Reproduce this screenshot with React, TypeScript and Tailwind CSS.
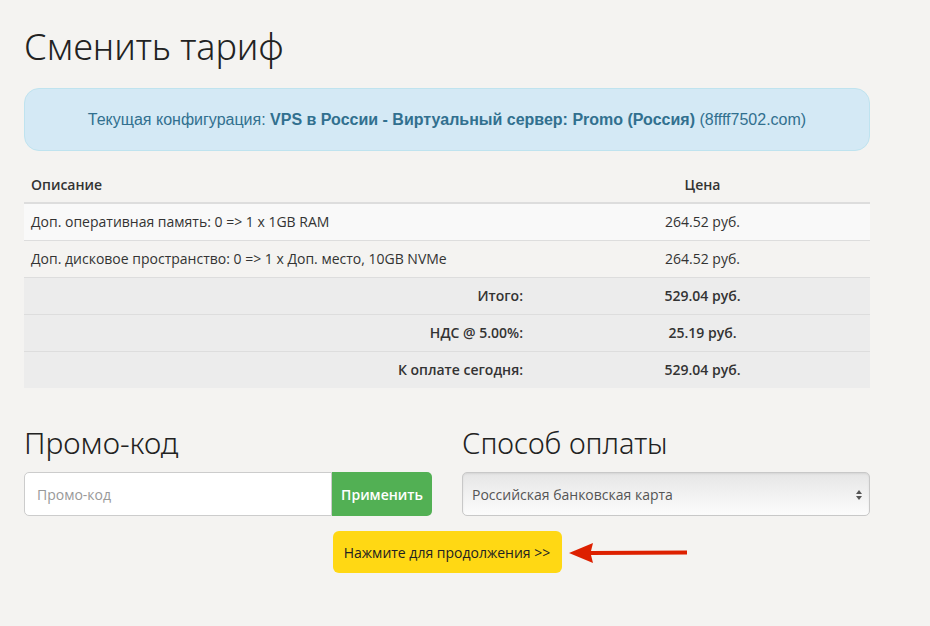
const rows = [
  { desc: 'Доп. оперативная память: 0 => 1 x 1GB RAM', price: '264.52 руб.' },
  { desc: 'Доп. дисковое пространство: 0 => 1 x Доп. место, 10GB NVMe', price: '264.52 руб.' },
];

const totals = [
  { label: 'Итого:', value: '529.04 руб.' },
  { label: 'НДС @ 5.00%:', value: '25.19 руб.' },
  { label: 'К оплате сегодня:', value: '529.04 руб.' },
];

export default function App() {
  return (
    <div className="min-h-[626px] bg-[#f4f3f1] font-['Open_Sans','Noto_Sans',sans-serif] text-[#333]">
      <div className="w-[846px] ml-[24px] pt-[24px]">
        <h1 className="text-[36px] leading-[46px] font-light text-[#222] font-['Noto_Sans','Open_Sans',sans-serif]">
          Сменить тариф
        </h1>

        {/* current config */}
        <div className="mt-[18px] h-[63px] flex items-center justify-center rounded-[15px] border border-[#bfe3ef] bg-[#d4e9f5] font-['Liberation_Sans',Arial,sans-serif] text-[16px] text-[#31708f]">
          <span>
            Текущая конфигурация: <b>VPS в России - Виртуальный сервер: Promo (Россия)</b> (8ffff7502.com)
          </span>
        </div>

        {/* table */}
        <table className="mt-[15px] w-full border-collapse text-[14px]">
          <thead>
            <tr className="border-b-2 border-[#ddd]">
              <th className="h-[37px] px-[7px] text-left font-semibold">Описание</th>
              <th className="w-[335px] text-center font-semibold">Цена</th>
            </tr>
          </thead>
          <tbody>
            {rows.map((r, i) => (
              <tr key={i} className={`border-b border-[#ddd] ${i === 0 ? 'bg-[#f9f9f9]' : ''}`}>
                <td className="h-[37px] px-[7px]">{r.desc}</td>
                <td className="text-center">{r.price}</td>
              </tr>
            ))}
            {totals.map((t, i) => (
              <tr key={t.label} className={`bg-[#ececec] ${i < totals.length - 1 ? 'border-b border-[#ddd]' : ''}`}>
                <td className="h-[37px] pl-[8px] pr-[12px] text-right font-semibold">{t.label}</td>
                <td className="text-center font-semibold">{t.value}</td>
              </tr>
            ))}
          </tbody>
        </table>

        {/* promo + payment */}
        <div className="mt-[37px] grid grid-cols-2 gap-[30px]">
          <div>
            <h2 className="text-[30px] leading-[36px] font-light text-[#222] font-['Noto_Sans','Open_Sans',sans-serif]">
              Промо-код
            </h2>
            <div className="mt-[11px] flex h-[44px]">
              <input
                placeholder="Промо-код"
                className="flex-1 min-w-0 rounded-l-[5px] border border-[#ccc] bg-white px-[12px] text-[14px] placeholder:text-[#999] outline-none"
              />
              <button className="w-[100px] rounded-r-[5px] bg-[#52b054] text-[14px] font-semibold text-white">
                Применить
              </button>
            </div>
          </div>
          <div>
            <h2 className="text-[29px] leading-[36px] font-light text-[#222] font-['Noto_Sans','Open_Sans',sans-serif]">
              Способ оплаты
            </h2>
            <div className="relative mt-[11px] h-[44px] rounded-[5px] border border-[#c8c8c8] bg-gradient-to-b from-[#e6e6e6] to-[#fcfcfc] shadow-[inset_0_1px_2px_rgba(0,0,0,0.08)] flex items-center px-[9px] text-[14px] text-[#555]">
              Российская банковская карта
              <svg className="absolute right-[6px] top-[16px]" width="8" height="12" viewBox="0 0 8 12">
                <path d="M4 1 L7 5 H1 Z" fill="#555" />
                <path d="M4 11 L7 7 H1 Z" fill="#555" />
              </svg>
            </div>
          </div>
        </div>

        {/* continue */}
        <div className="mt-[15px] flex justify-center">
          <div className="relative">
            <button className="h-[42px] w-[229px] rounded-[6px] bg-[#ffd814] text-[14px] text-[#222]">
              Нажмите для продолжения &gt;&gt;
            </button>
            <svg className="absolute left-[236px] top-[11px]" width="120" height="22" viewBox="0 0 120 22">
              <path d="M0 11 L24 1 L22 9 L118 8.5 L118 12.5 L22 13 L24 21 Z" fill="#dd2000" />
            </svg>
          </div>
        </div>
      </div>
    </div>
  );
}
